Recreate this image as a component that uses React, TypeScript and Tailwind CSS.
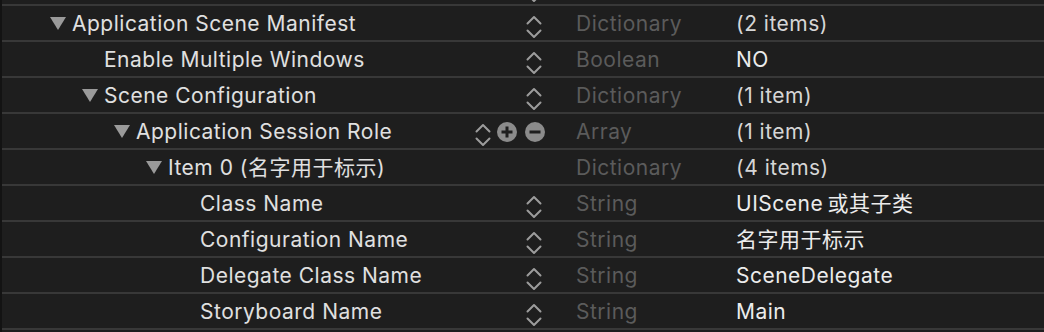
import React from "react";

type Row = {
  level: number;
  tri?: boolean;
  k: string;
  ctrl: "chev" | "full" | "none";
  type: string;
  value: string;
  bright?: boolean;
};

const rows: Row[] = [
  { level: 0, tri: true, k: "Application Scene Manifest", ctrl: "chev", type: "Dictionary", value: "(2 items)" },
  { level: 1, k: "Enable Multiple Windows", ctrl: "chev", type: "Boolean", value: "NO", bright: true },
  { level: 1, tri: true, k: "Scene Configuration", ctrl: "chev", type: "Dictionary", value: "(1 item)" },
  { level: 2, tri: true, k: "Application Session Role", ctrl: "full", type: "Array", value: "(1 item)" },
  { level: 3, tri: true, k: "Item 0 (名字用于标示)", ctrl: "none", type: "Dictionary", value: "(4 items)" },
  { level: 4, k: "Class Name", ctrl: "chev", type: "String", value: "UIScene\u2009或其子类", bright: true },
  { level: 4, k: "Configuration Name", ctrl: "chev", type: "String", value: "名字用于标示", bright: true },
  { level: 4, k: "Delegate Class Name", ctrl: "chev", type: "String", value: "SceneDelegate", bright: true },
  { level: 4, k: "Storyboard Name", ctrl: "chev", type: "String", value: "Main", bright: true },
];

const triPad = ["pl-[50px]", "pl-[82px]", "pl-[114px]", "pl-[146px]", "pl-[178px]"];
const textPad = ["pl-[72px]", "pl-[104px]", "pl-[136px]", "pl-[168px]", "pl-[200px]"];

const FONT = {
  fontFamily: '"Inter", "Noto Sans CJK SC", sans-serif',
};

function Chevron() {
  return (
    <svg width="16" height="24" viewBox="0 0 16 24" className="block">
      <path d="M1.5 8.5 L8 2 L14.5 8.5" fill="none" stroke="#9c9c9c" strokeWidth="2" strokeLinecap="round" strokeLinejoin="round" />
      <path d="M1.5 15.5 L8 22 L14.5 15.5" fill="none" stroke="#9c9c9c" strokeWidth="2" strokeLinecap="round" strokeLinejoin="round" />
    </svg>
  );
}

function Triangle() {
  return (
    <svg width="16" height="13" viewBox="0 0 16 13" className="block">
      <path d="M0 0 L16 0 L8 13 Z" fill="#9a9a9a" />
    </svg>
  );
}

function CircleBtn({ plus }: { plus?: boolean }) {
  return (
    <svg width="20" height="20" viewBox="0 0 20 20" className="block">
      <circle cx="10" cy="10" r="10" fill="#8b8b8b" />
      <rect x="4.5" y="8.5" width="11" height="3" fill="#1e1e1e" />
      {plus && <rect x="8.5" y="4.5" width="3" height="11" fill="#1e1e1e" />}
    </svg>
  );
}

function Controls({ ctrl }: { ctrl: Row["ctrl"] }) {
  if (ctrl === "none") return null;
  if (ctrl === "chev")
    return (
      <div className="self-start pt-[9px] pr-[34px]">
        <Chevron />
      </div>
    );
  return (
    <div className="flex items-start pr-[31px]">
      <div className="pt-[9px] mr-[6px]">
        <Chevron />
      </div>
      <div className="pt-[8px] flex items-start">
        <CircleBtn plus />
        <div className="ml-[8px]">
          <CircleBtn />
        </div>
      </div>
    </div>
  );
}

const TXT = "text-[21px] leading-none tracking-[0.5px] whitespace-nowrap";

function RowView({ r }: { r: Row }) {
  return (
    <div className="flex h-[36px] border-t-2 border-[#383838]">
      <div className={`flex w-[576px] shrink-0 ${r.tri ? triPad[r.level] : textPad[r.level]}`}>
        <div className="flex flex-1 items-center min-w-0">
          {r.tri && (
            <div className="mr-[6px] shrink-0">
              <Triangle />
            </div>
          )}
          <span className={`${TXT} text-[#e0e0e0]`}>{r.k}</span>
        </div>
        <Controls ctrl={r.ctrl} />
      </div>
      <div className="flex w-[160px] shrink-0 items-center">
        <span className={`${TXT} text-[#5b5b5b]`}>{r.type}</span>
      </div>
      <div className="flex flex-1 items-center">
        <span className={`${TXT} ${r.bright ? "text-[#ececec]" : "text-[#d6d6d6]"}`}>{r.value}</span>
      </div>
    </div>
  );
}

export default function App() {
  return (
    <div className="w-[1044px] h-[332px] overflow-hidden bg-[#1e1e1e] border-l-2 border-[#131313]" style={FONT}>
      <div className="-mt-[32px] -ml-[2px]">
        <div className="flex h-[36px] border-t-2 border-[#383838]">
          <div className="flex w-[576px] shrink-0 justify-end">
            <Controls ctrl="chev" />
          </div>
        </div>
        {rows.map((r, i) => (
          <RowView key={i} r={r} />
        ))}
        <div className="h-[36px] border-t-2 border-[#383838]" />
      </div>
    </div>
  );
}
